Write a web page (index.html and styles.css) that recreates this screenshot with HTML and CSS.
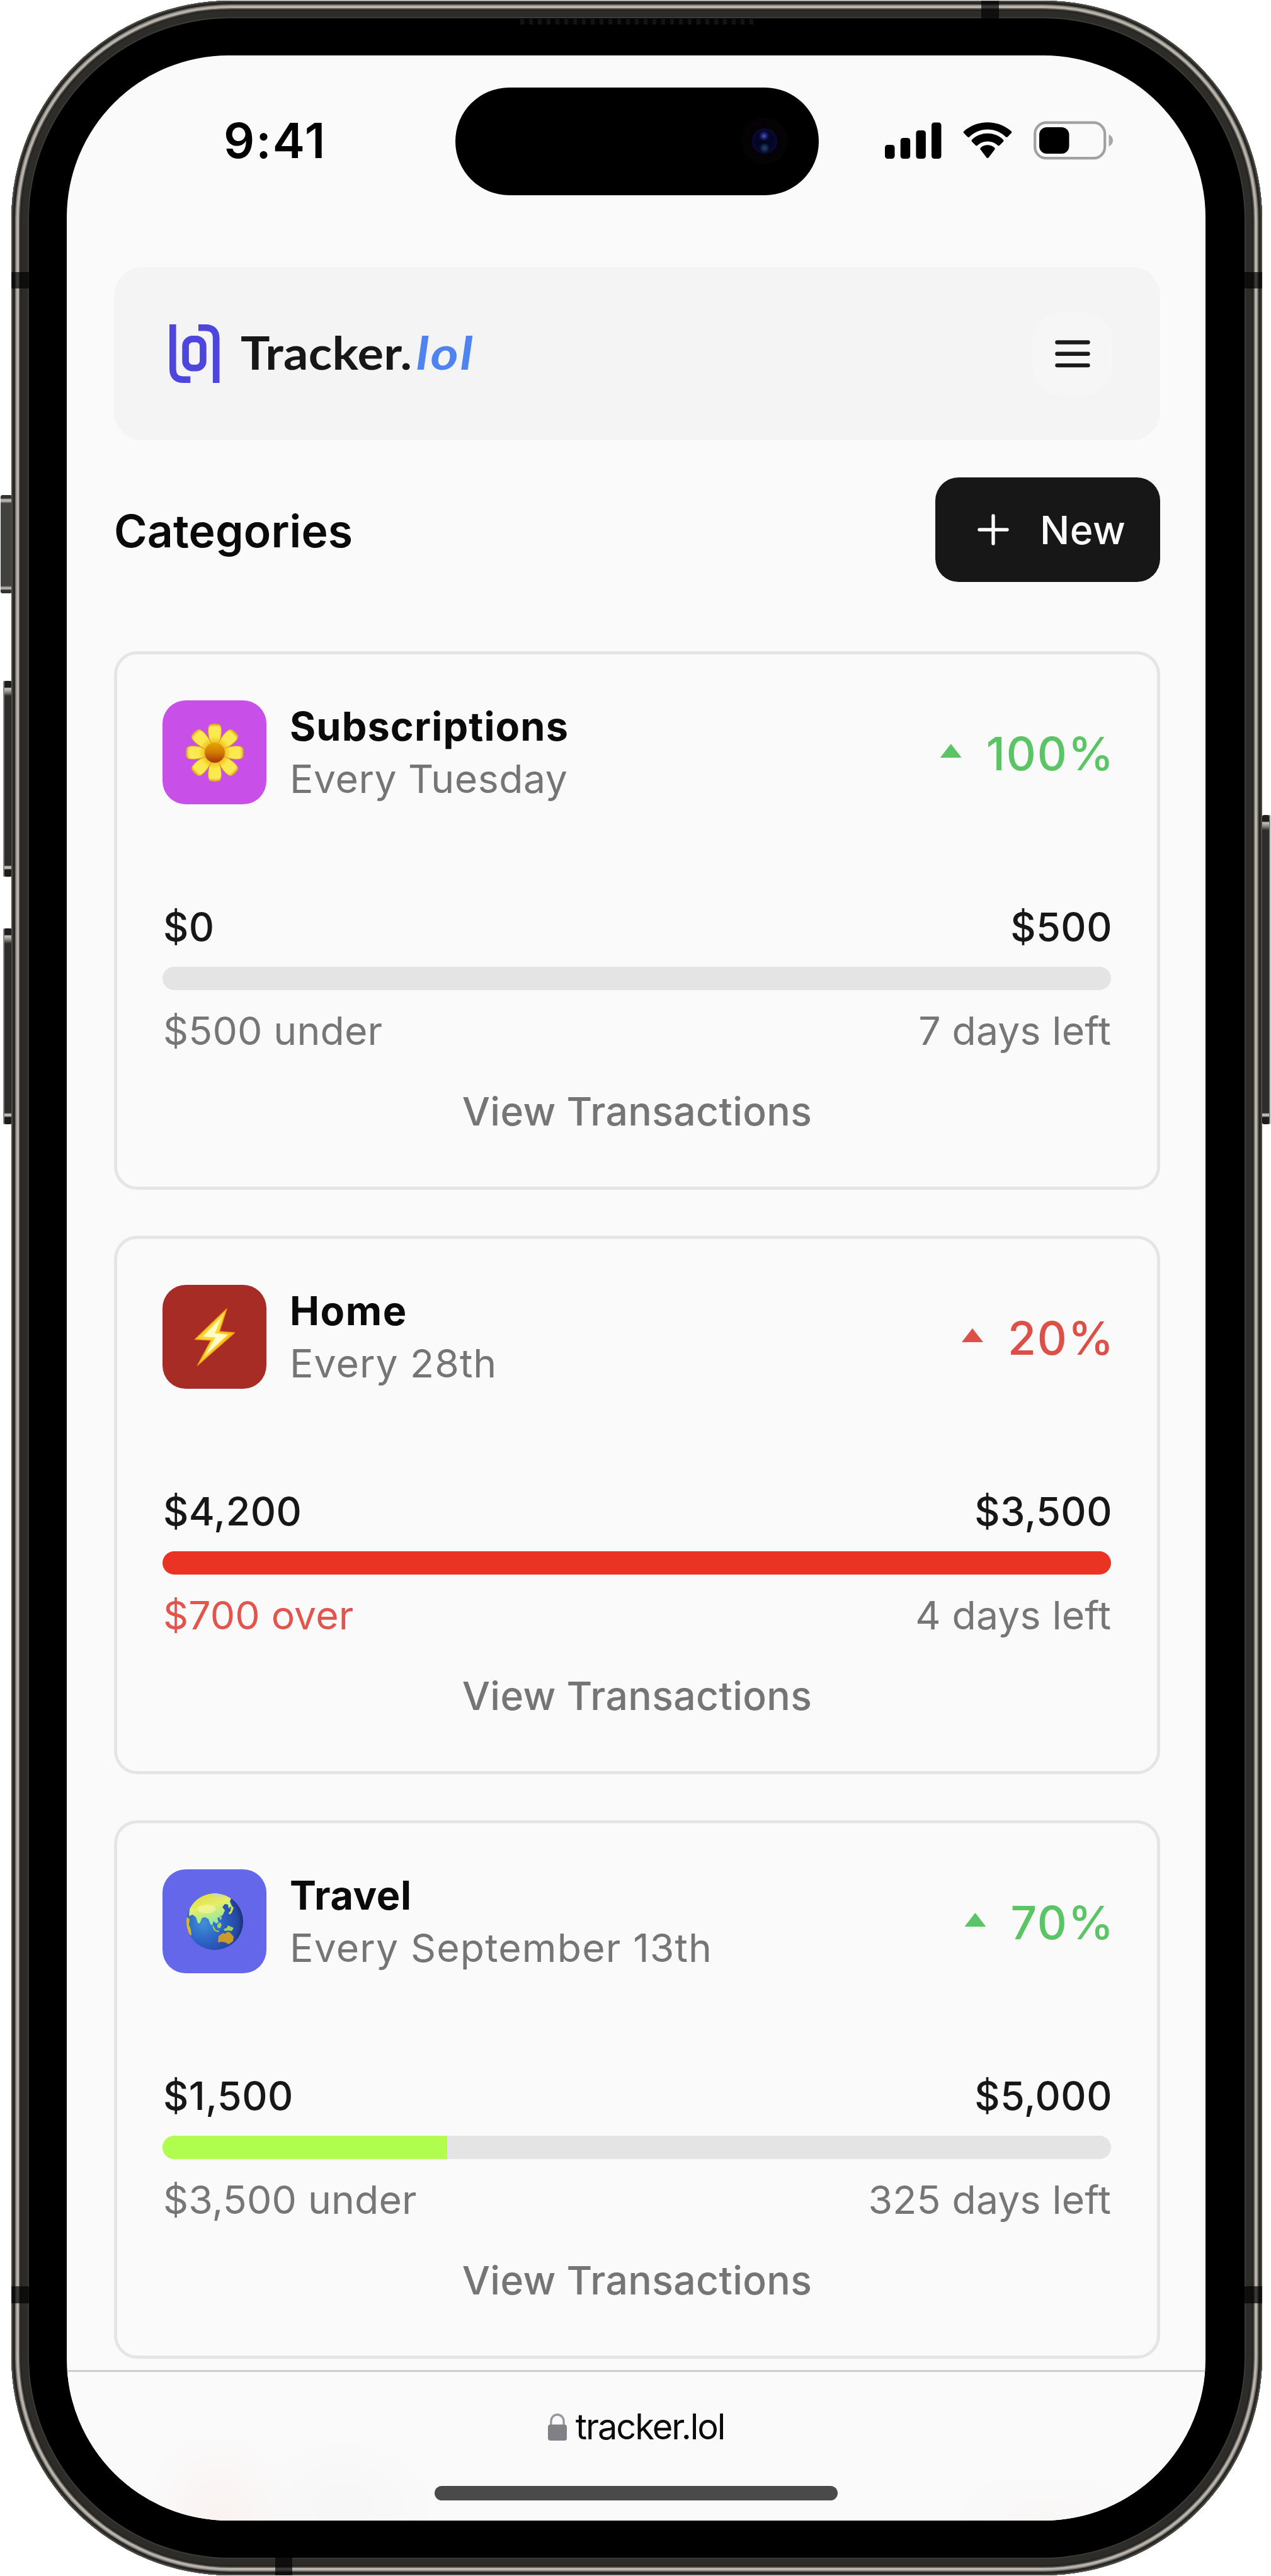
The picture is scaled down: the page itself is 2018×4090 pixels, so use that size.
FILE: index.html
```html
<!DOCTYPE html>
<html lang="en">
<head>
<meta charset="utf-8">
<title>Tracker.lol</title>
<link rel="stylesheet" href="styles.css">
</head>
<body>
<div class="device">
  <span class="key key-action"></span>
  <span class="key key-up"></span>
  <span class="key key-down"></span>
  <span class="key key-power"></span>
  <div class="body">
    <span class="band band-left-top"></span>
    <span class="band band-left-bottom"></span>
    <span class="band band-right-top"></span>
    <span class="band band-right-bottom"></span>
    <span class="band band-top"></span>
    <span class="band band-bottom"></span>
    <span class="speaker"></span>

    <div class="screen">
      <div class="status">
        <span class="time">9:41</span>
        <div class="island"><span class="camera"></span></div>
        <div class="indicators">
          <svg width="90" height="60" viewBox="0 0 90 60">
            <rect x="0" y="37" width="15.5" height="22" rx="4.5"/>
            <rect x="24.7" y="26" width="15.5" height="33" rx="4.5"/>
            <rect x="49.4" y="14" width="15.5" height="45" rx="4.5"/>
            <rect x="74" y="1.500" width="15.500" height="57.5" rx="4.5"/>
          </svg>
          <svg width="80" height="60" viewBox="0 0 80 60">
            <path d="M40 12.500c10.800 0 21 4.200 28.700 11.800a2.200 2.200 0 0 0 3.100 0l5.700-5.700a2.300 2.300 0 0 0 0-3.300C56.500-3.500 23.500-3.500 2.500 15.300a2.300 2.300 0 0 0 0 3.300l5.700 5.700a2.200 2.200 0 0 0 3.100 0C19 16.700 29.200 12.500 40 12.500z"/>
            <path d="M40 31.600c5.900 0 11.600 2.200 16 6.200a2.200 2.200 0 0 0 3.100 0l5.700-5.800a2.300 2.300 0 0 0 0-3.300c-14-13.200-35.600-13.200-49.600 0a2.300 2.300 0 0 0 0 3.300l5.700 5.800a2.200 2.200 0 0 0 3.100 0c4.400-4 10.100-6.200 16-6.200z"/>
            <path d="M51 44.800a2.300 2.300 0 0 0 0-3.400c-6.300-5.400-15.700-5.400-22 0a2.300 2.300 0 0 0 0 3.400l9.400 12.400a2 2 0 0 0 3.200 0z"/>
          </svg>
          <svg width="127" height="62" viewBox="0 0 127 62">
            <rect x="2.200" y="2.700" width="111" height="56.500" rx="18" fill="none" stroke="#a1a1a1" stroke-width="4.200"/>
            <path d="M119.500 21.500v19c4-1.700 6.500-5.400 6.500-9.500s-2.500-7.800-6.500-9.500z" fill="#a8a8a8"/>
            <rect x="9" y="10" width="47.500" height="42" rx="12"/>
          </svg>
        </div>
      </div>

      <main class="page">
        <header class="navbar">
          <div class="brand">
            <svg class="brand-mark" width="80" height="94" viewBox="0 0 80 94" fill="none" stroke="#4d45de" stroke-width="10.600">
              <path d="M5.300 0V70.500Q5.300 87.700 22.500 87.700H33.300"/>
              <path d="M46 5.300H57Q74.200 5.300 74.200 22.500V93"/>
              <rect x="25.600" y="23.300" width="27.800" height="46" rx="11"/>
            </svg>
            <span class="brand-name">Tracker.<em>lol</em></span>
          </div>
          <button class="menu" aria-label="Menu">
            <svg width="56" height="44" viewBox="0 0 56 44" stroke="#1a1a1a" stroke-width="6.400" stroke-linecap="round">
              <path d="M3.500 3.500h49M3.500 21.800h49M3.500 40.100h49"/>
            </svg>
          </button>
        </header>

        <div class="section-head">
          <h1>Categories</h1>
          <button class="new">
            <svg width="50" height="50" viewBox="0 0 50 50" stroke="#fafafa" stroke-width="5.400" stroke-linecap="round"><path d="M25 3v44M3 25h44"/></svg>
            <span>New</span>
          </button>
        </div>

        <section class="cards">
          <article class="card">
            <div class="card-head">
              <div class="tile tile-purple">
                <svg width="92" height="94" viewBox="-46 -47 92 94">
                  <defs>
                    <radialGradient id="petal" gradientUnits="userSpaceOnUse" cx="0" cy="0" r="46">
                      <stop offset=".3" stop-color="#f0b71c"/><stop offset=".55" stop-color="#fbe84a"/><stop offset=".88" stop-color="#faea58"/><stop offset="1" stop-color="#dfa21c"/>
                    </radialGradient>
                    <linearGradient id="core" x1="0" y1="0" x2="0" y2="1"><stop offset="0" stop-color="#e7a500"/><stop offset=".5" stop-color="#cf7a05"/><stop offset="1" stop-color="#a93506"/></linearGradient>
                    <path id="p" d="M-6-12C-10-24-12-36-9-43Q-6-46.500-3-45Q0-47 3-45Q6-46.500 9-43C12-36 10-24 6-12z"/>
                  </defs>
                  <g fill="url(#petal)" stroke="#d99b1e" stroke-width="1">
                    <use href="#p"/><use href="#p" transform="rotate(45)"/><use href="#p" transform="rotate(90)"/><use href="#p" transform="rotate(135)"/>
                    <use href="#p" transform="rotate(180)"/><use href="#p" transform="rotate(225)"/><use href="#p" transform="rotate(270)"/><use href="#p" transform="rotate(315)"/>
                  </g>
                  <circle r="16" fill="url(#core)"/>
                </svg>
              </div>
              <div class="names"><h2 class="n-subs">Subscriptions</h2><p>Every Tuesday</p></div>
              <div class="delta up"><i></i><span>100%</span></div>
            </div>
            <div class="line amounts"><span>$0</span><span>$500</span></div>
            <div class="bar"></div>
            <div class="line notes"><span>$500 under</span><span>7 days left</span></div>
            <a class="view">View Transactions</a>
          </article>

          <article class="card">
            <div class="card-head">
              <div class="tile tile-red">
                <svg width="66" height="94" viewBox="0 0 66 94">
                  <defs><linearGradient id="bolt" x1="0" y1="0" x2="1" y2="1"><stop offset=".1" stop-color="#ffc91a"/><stop offset=".45" stop-color="#ffd93a"/><stop offset=".9" stop-color="#ffa500"/></linearGradient></defs>
                  <path d="M52 2 1.500 50.500 27 52 5.500 92 64.500 40 40.500 38z" fill="url(#bolt)" stroke="#f29a0c" stroke-width="1.400" stroke-linejoin="round"/>
                  <path d="M44 15 14 46 34 47.500 17 77 54 43 33 41z" fill="#fffbc4"/>
                </svg>
              </div>
              <div class="names"><h2 class="n-home">Home</h2><p class="p-home">Every 28th</p></div>
              <div class="delta down"><i></i><span>20%</span></div>
            </div>
            <div class="line amounts"><span>$4,200</span><span>$3,500</span></div>
            <div class="bar"><div class="fill fill-red" style="width:100%"></div></div>
            <div class="line notes"><span class="over">$700 over</span><span>4 days left</span></div>
            <a class="view">View Transactions</a>
          </article>

          <article class="card">
            <div class="card-head">
              <div class="tile tile-indigo">
                <svg width="92" height="92" viewBox="0 0 92 92">
                  <defs>
                    <radialGradient id="sea" cx=".3" cy=".52" r=".72"><stop offset="0" stop-color="#4290d4"/><stop offset=".5" stop-color="#2b60c4"/><stop offset=".85" stop-color="#2348a4"/><stop offset="1" stop-color="#1b2a60"/></radialGradient>
                    <linearGradient id="land" x1="0" y1="0" x2=".4" y2="1"><stop offset="0" stop-color="#dfd62e"/><stop offset=".5" stop-color="#e4ee6a"/><stop offset="1" stop-color="#93e8a4"/></linearGradient>
                    <clipPath id="disc"><circle cx="46" cy="46" r="45"/></clipPath>
                  </defs>
                  <circle cx="46" cy="46" r="45" fill="url(#sea)"/>
                  <g clip-path="url(#disc)">
                    <path d="M6 26C14 10 28 1 46 1c10 0 20 3 26 8l-2 5 3 7-5 4-1-6-5-1-4 5 4 5-3 7-5 4-4 1 2 7-4 2-4-4-2 7-3-2-3-8-5-3-5 1-4 9-3-1-3-9-5-4-6 2z" fill="url(#land)"/>
                    <path d="M1 38l5 4-1 9 3 8 1 9-4-2-5-14z" fill="#d8b92c"/>
                    <path d="M41 50l5 6 1 3 6 2-1 2-7-3zM50 50l5-3 2 5-3 5-4-2zM53 37l3-2 1 7-3 1zM60 58l5-2 2-4 9 4-3 5-6-1-5 1z" fill="#a2d25a"/>
                    <path d="M72 20l4 4-3 8-4 3-1-3 3-3z" fill="#cfe04a"/>
                    <path d="M52 69l7-5 4 1 3-3 4 1 6 7-1 7-7 5-5-3-6-1-6 1z" fill="#cb9a2a"/>
                    <path d="M40 2q5-2 10-1l12 4-5 2-7-2-6 1z" fill="#c9d3cf"/>
                    <ellipse cx="33" cy="26" rx="14" ry="7" fill="#fbf6a2" opacity=".6"/>
                  </g>
                </svg>
              </div>
              <div class="names"><h2 class="n-travel">Travel</h2><p class="p-travel">Every September 13th</p></div>
              <div class="delta up"><i></i><span>70%</span></div>
            </div>
            <div class="line amounts"><span>$1,500</span><span>$5,000</span></div>
            <div class="bar"><div class="fill fill-lime" style="width:30%"></div></div>
            <div class="line notes"><span>$3,500 under</span><span>325 days left</span></div>
            <a class="view">View Transactions</a>
          </article>
        </section>
      </main>

      <footer class="browser-bar">
        <div class="address">
          <svg width="30" height="43" viewBox="0 0 30 43">
            <path d="M4.900 19V12.500a10.100 10.800 0 0 1 20.200 0V19" fill="none" stroke="#98989c" stroke-width="3.400"/>
            <rect x="0" y="17.500" width="30" height="25.500" rx="4" fill="#808085"/>
          </svg>
          <span>tracker.lol</span>
        </div>
        <div class="home-indicator"></div>
      </footer>
    </div>
  </div>
</div>
</body>
</html>
```
FILE: styles.css
```css
* { box-sizing: border-box; margin: 0; padding: 0; }
body { background: #fff; font-family: "Inter", "Liberation Sans", sans-serif; color: #171717; }
svg { display: block; flex: none; }
button { border: 0; font: inherit; color: inherit; }

/* Device frame */
.device { position: relative; width: 2018px; height: 4090px; padding: 1px 14px 1px 18px; overflow: hidden; }
.body {
  position: relative;
  height: 4088px;
  padding: 87px 90px 87px 88px;
  border-radius: 348px;
  background: #000;
  box-shadow:
    inset 0 0 0 2px #4d4c48,
    inset 0 0 0 6px #292824,
    inset 0 0 0 8px #7d7a75,
    inset 0 0 0 12px #b8b2aa,
    inset 0 0 0 14px #55534f,
    inset 0 0 0 16px #232220,
    inset 0 0 0 26px #2d2c29,
    inset 0 0 0 28px #3b3a36;
}
.key { position: absolute; border-radius: 3px; background: linear-gradient(#222 0, #1c1c1a 10px, #c9c5bf 12px, #8a8782 18px, #2e2d2b 24px, #2e2d2b calc(100% - 24px), #2e2d2b calc(100% - 18px), #c9c5bf calc(100% - 16px), #b9b5af calc(100% - 13px), #1c1c1a calc(100% - 11px)); }
.key-action { left: 1px; top: 786px; width: 18px; height: 156px; background: linear-gradient(#333 0, #333 5px, #b5b2ac 7px, #b5b2ac 10px, #41413f 13px, #41413f calc(100% - 12px), #b5b2ac calc(100% - 9px), #b5b2ac calc(100% - 7px), #333 calc(100% - 5px)); }
.key-up { left: 5px; top: 1081px; width: 14px; height: 311px; box-shadow: inset 2px 0 #85837f; }
.key-down { left: 5px; top: 1474px; width: 14px; height: 311px; box-shadow: inset 2px 0 #85837f; }
.key-power { left: 2004px; top: 1294px; width: 13px; height: 491px; box-shadow: inset -2px 0 #85837f; }
.band { position: absolute; background: rgba(0, 0, 0, .68); }
.band-left-top { left: 0; top: 431px; width: 28px; height: 26px; }
.band-right-top { right: 0; top: 431px; width: 28px; height: 26px; }
.band-left-bottom { left: 0; top: 3629px; width: 28px; height: 27px; }
.band-right-bottom { right: 0; top: 3629px; width: 28px; height: 27px; }
.band-top { left: 1540px; top: 0; width: 28px; height: 28px; }
.band-bottom { left: 419px; bottom: 0; width: 27px; height: 28px; }
.speaker { position: absolute; left: 808px; top: 29px; width: 370px; height: 9px; background: repeating-linear-gradient(90deg, #131313 0 6px, #030303 6px 14px); }

/* Screen */
.screen { display: flex; flex-direction: column; height: 3914px; border-radius: 257px; overflow: hidden; background: #fafafa; }
.status { display: flex; align-items: center; height: 272px; margin-bottom: 64px; padding-left: 249px; }
.time { width: 368px; padding-bottom: 2px; font-size: 77px; line-height: 92px; font-weight: 620; letter-spacing: 2px; color: #000; }
.island { display: flex; align-items: center; justify-content: flex-end; width: 577px; height: 171px; padding-right: 49px; border-radius: 86px; background: #000; }
.camera { width: 74px; height: 74px; border-radius: 50%; background:
  radial-gradient(circle at 36px 29px, #5a5fd0 0, #2a2c8a 3px, transparent 8px),
  radial-gradient(circle at 37px 48px, #44357a 0, #12304a 4px, transparent 8px),
  radial-gradient(circle at 37px 37px, #04041c 0, #06062c 16px, #0b0b30 19px, #040207 21px, #060306 36px); }
.indicators { display: flex; align-items: center; gap: 33px; margin-left: 105px; padding-bottom: 2px; }

.page { padding: 0 72px 0 75px; }
.navbar { display: flex; align-items: center; justify-content: space-between; height: 275px; padding: 0 75px 0 88px; border-radius: 46px; background: #f4f4f4; }
.brand { display: flex; align-items: center; gap: 33px; }
.brand-name { padding-bottom: 5px; font: 700 72px/90px "Lato", sans-serif; letter-spacing: .3px; color: #171717; transform: scaleX(1.08); transform-origin: 0 50%; }
.brand-name em { display: inline-block; margin-left: 6px; letter-spacing: 2.200px; color: #4f83f1; transform: scaleX(1.09); transform-origin: 0 50%; }
.menu { display: flex; align-items: center; justify-content: center; width: 128px; height: 131px; border-radius: 46px; background: #f6f6f6; }

.section-head { display: flex; align-items: center; justify-content: space-between; height: 166px; margin: 59px 0 110px; }
.section-head h1 { padding-top: 3px; font-size: 71.5px; line-height: 90px; font-weight: 600; letter-spacing: .1px; color: #0a0a0a; }
.new { display: flex; align-items: center; gap: 49px; width: 357px; height: 166px; padding: 0 0 0 67px; border-radius: 37px; background: #171717; color: #fafafa; font-size: 62.5px; font-weight: 500; letter-spacing: .5px; }

/* Cards */
.cards { display: flex; flex-direction: column; gap: 73px; }
.card { height: 855px; padding: 73px 73px 37px; border: 5px solid #e5e5e5; border-radius: 37px; }
.card-head { display: flex; align-items: center; height: 165px; margin-bottom: 148px; }
.tile { display: flex; align-items: center; justify-content: center; width: 165px; height: 165px; margin: 0 37px 0 -1px; border-radius: 37px; }
.tile-purple { background: #c850e8; }
.tile-red { background: #a82c26; }
.tile-indigo { background: #6467ea; }
.names { flex: 1; font-size: 62.5px; line-height: 82.5px; white-space: nowrap; }
.names h2 { font-size: 63px; font-weight: 650; color: #0a0a0a; }
.n-subs { letter-spacing: 1.100px; }
.n-home { letter-spacing: 1.500px; }
.n-travel { letter-spacing: .6px; }
.names p { font-weight: 430; letter-spacing: .5px; color: #757575; }
.names .p-home { letter-spacing: 1px; }
.names .p-travel { letter-spacing: 1.150px; }
.delta { display: flex; align-items: center; gap: 39px; margin-right: -6px; font-size: 73px; line-height: 90px; font-weight: 550; letter-spacing: 1.800px; }
.delta span { padding-top: 5px; }
.delta i { width: 34px; height: 22px; margin-bottom: 5px; background: currentColor; clip-path: polygon(50% 0, 100% 100%, 0 100%); }
.up { color: #5bc465; }
.down { color: #dd5047; }
.line { display: flex; justify-content: space-between; font-size: 62.5px; line-height: 92px; }
.amounts { margin-right: -2px; letter-spacing: .5px; color: #171717; font-weight: 450; }
.notes { letter-spacing: .15px; color: #767676; }
.over { color: #e2544c; }
.bar { height: 37px; margin: 18px 0 18px -1px; border-radius: 19px; overflow: hidden; background: #e4e4e4; }
.fill { height: 100%; }
.fill-red { background: #eb3323; }
.fill-lime { background: #b0fd50; }
.view { display: block; text-align: center; font-size: 62.5px; line-height: 165px; font-weight: 500; letter-spacing: .35px; color: #757575; }

/* Browser chrome */
.browser-bar { display: flex; flex-direction: column; align-items: center; height: 239px; margin-top: 18px; border-top: 3px solid #cdcdcd; background:
  radial-gradient(ellipse 120px 150px at 240px 236px, rgba(250, 225, 222, .32), transparent),
  radial-gradient(ellipse 160px 110px at 440px 210px, rgba(238, 238, 240, .3), transparent),
  radial-gradient(ellipse 160px 90px at 1556px 236px, rgba(248, 238, 236, .3), transparent),
  #fafafa; }
.address { display: flex; align-items: center; gap: 14px; margin-top: 51px; height: 72px; font-size: 56px; line-height: 72px; letter-spacing: -2.080px; color: #0a0a0a; }
.home-indicator { width: 640px; height: 23px; margin-top: 58px; border-radius: 12px; background: #4a4a4a; }
```
